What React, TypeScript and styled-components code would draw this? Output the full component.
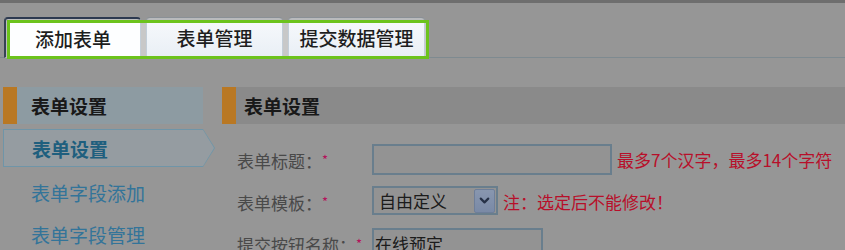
import { ChevronDown } from "lucide-react"
import styled, { createGlobalStyle } from "styled-components"

const GlobalStyle = createGlobalStyle`
  html, body {
    margin: 0;
    padding: 0;
    overflow: hidden;
    background: #c8c8c8;
  }
  body {
    font-family: "Noto Sans CJK SC", "Liberation Sans", sans-serif;
  }
`

const Page = styled.div`
  min-height: 250px;
  background: #c8c8c8;
  border-top: 3px solid #939393;
`

const TabBar = styled.div`
  position: relative;
  display: flex;
  gap: 5px;
  padding: 14px 0 0 4px;
  border-bottom: 1px solid #a8b8c0;
`

const Tab = styled.div<{ $active?: boolean }>`
  box-sizing: border-box;
  width: 137px;
  height: 41px;
  margin-bottom: -1px;
  display: flex;
  align-items: center;
  justify-content: center;
  font-size: 19px;
  font-weight: 500;
  color: #1e1e1e;
  border: 1px solid #c3ced8;
  border-radius: 4px 4px 0 0;
  background: ${(p) => (p.$active ? "#fdfeff" : "linear-gradient(#f7f9fc, #e9eff5)")};
  border-top: ${(p) => (p.$active ? "2px solid #3b4c6b" : "1px solid #b8c0c8")};
  border-left: ${(p) => (p.$active ? "2px solid #4a5870" : "1px solid #c3ced8")};
  border-bottom: ${(p) => (p.$active ? "1px solid #fdfeff" : "1px solid #c3ced8")};
`

// guide mask: everything but the tab strip is dimmed
const Spotlight = styled.div`
  position: absolute;
  left: 7px;
  top: 17px;
  box-sizing: border-box;
  width: 422px;
  height: 39px;
  border: 3px solid #6cc31c;
  box-shadow: 0 0 0 3000px rgba(0, 0, 0, 0.25);
  pointer-events: none;
  z-index: 5;
`

const Body = styled.div`
  display: flex;
  padding-top: 29px;
`

const Sidebar = styled.div`
  width: 200px;
  margin-left: 3px;
`

const SideHeader = styled.div`
  height: 37px;
  display: flex;
  align-items: center;
  box-sizing: border-box;
  border-left: 14px solid #f7a030;
  background: #bdcfd9;
  padding-left: 14px;
  font-size: 19px;
  font-weight: bold;
  color: #222;
`

const Menu = styled.div`
  margin-top: 5px;
  display: flex;
  flex-direction: column;
`

const MenuItem = styled.div<{ $active?: boolean }>`
  position: relative;
  box-sizing: border-box;
  height: ${(p) => (p.$active ? "38px" : "42px")};
  margin-bottom: ${(p) => (p.$active ? "4px" : "0")};
  display: flex;
  align-items: center;
  padding-left: 28px;
  font-size: 19px;
  font-weight: ${(p) => (p.$active ? "bold" : "normal")};
  color: ${(p) => (p.$active ? "#2a7fa9" : "#459bcd")};
  ${(p) => p.$active && `
    border: 1px solid #94c7e0;
    border-right: none;
    background: #c7d1d7;
    &::before, &::after {
      content: "";
      position: absolute;
      left: 100%;
      width: 0;
      height: 0;
    }
    &::before {
      top: -1px;
      border-top: 19px solid transparent;
      border-bottom: 19px solid transparent;
      border-left: 12px solid #94c7e0;
    }
    &::after {
      top: 0;
      border-top: 18px solid transparent;
      border-bottom: 18px solid transparent;
      border-left: 11px solid #c7d1d7;
    }
  `}
`

const Main = styled.div`
  flex: 1;
  margin-left: 19px;
`

const MainHeader = styled.div`
  height: 37px;
  display: flex;
  align-items: center;
  box-sizing: border-box;
  border-left: 14px solid #f7a030;
  background: #b9b9b9;
  padding-left: 8px;
  font-size: 19px;
  font-weight: bold;
  color: #222;
`

const Form = styled.div`
  padding: 20px 0 0 15px;
  display: flex;
  flex-direction: column;
`

const Row = styled.div`
  height: 42px;
  display: flex;
  align-items: flex-start;
`

const Label = styled.div`
  width: 135px;
  flex-shrink: 0;
  display: flex;
  align-items: center;
  font-size: 17px;
  color: #626262;
  white-space: nowrap;
  padding-top: 4px;
`

const Star = styled.span`
  color: #f0157a;
  font-size: 13px;
  align-self: flex-start;
  margin-top: 2px;
`

const TextInput = styled.div<{ $w: number }>`
  box-sizing: border-box;
  width: ${(p) => p.$w}px;
  height: 31px;
  border: 2px solid #8da9bd;
  background: #c5c5c5;
  display: flex;
  align-items: center;
  padding-left: 1px;
  font-size: 17px;
  color: #262626;
`

const Select = styled.div`
  box-sizing: border-box;
  width: 126px;
  height: 29px;
  border: 2px solid #8da9bd;
  background: #c5c5c5;
  display: flex;
  align-items: center;
  justify-content: space-between;
  padding: 0 1px 0 5px;
  font-size: 17px;
  color: #262626;
`

const SelectButton = styled.div`
  box-sizing: border-box;
  width: 21px;
  height: 24px;
  border: 1px solid #93a8cc;
  border-radius: 2px;
  background: linear-gradient(#b6c9ea, #a3b8de);
  display: flex;
  align-items: center;
  justify-content: center;
  color: #33425f;
`

const Hint = styled.span<{ $h: number }>`
  margin-left: 5px;
  font-size: 17px;
  color: #f51538;
  white-space: nowrap;
  line-height: ${(p) => p.$h}px;
`

const tabs = ["添加表单", "表单管理", "提交数据管理"]
const menu = ["表单设置", "表单字段添加", "表单字段管理"]

const App = () => {
  return <Page>
    <GlobalStyle />
    <TabBar>
      {tabs.map((t, i) => <Tab key={t} $active={i === 0}>{t}</Tab>)}
      <Spotlight />
    </TabBar>
    <Body>
      <Sidebar>
        <SideHeader>表单设置</SideHeader>
        <Menu>
          {menu.map((m, i) => <MenuItem key={m} $active={i === 0}>{m}</MenuItem>)}
        </Menu>
      </Sidebar>
      <Main>
        <MainHeader>表单设置</MainHeader>
        <Form>
          <Row>
            <Label>表单标题：<Star>*</Star></Label>
            <TextInput $w={240} />
            <Hint $h={31}>最多7个汉字，最多14个字符</Hint>
          </Row>
          <Row>
            <Label>表单模板：<Star>*</Star></Label>
            <Select>
              自由定义
              <SelectButton><ChevronDown size={15} strokeWidth={3.5} /></SelectButton>
            </Select>
            <Hint $h={31}>注：选定后不能修改！</Hint>
          </Row>
          <Row>
            <Label>提交按钮名称：<Star>*</Star></Label>
            <TextInput $w={171}>在线预定</TextInput>
          </Row>
        </Form>
      </Main>
    </Body>
  </Page>
}

export default App
